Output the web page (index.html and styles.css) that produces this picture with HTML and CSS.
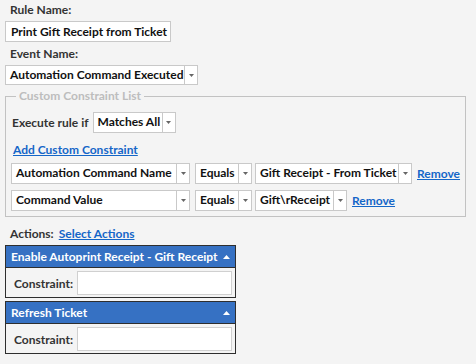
FILE: index.html
```html
<!DOCTYPE html>
<html lang="en">
<head>
    <meta charset="UTF-8">
    <title>Rule Editor</title>
    <link rel="stylesheet" href="styles.css">
</head>
<body>
    <div class="rule-form">
        <div class="field-label">Rule Name:</div>
        <div class="textbox rule-name">Print Gift Receipt from Ticket</div>

        <div class="field-label">Event Name:</div>
        <div class="combo event-combo">
            <span class="combo-text">Automation Command Executed</span>
            <span class="combo-btn"><svg width="5" height="3" viewBox="0 0 5 3"><path d="M0 0h5L2.5 3z" fill="#666"/></svg></span>
        </div>

        <fieldset class="constraint-list">
            <legend>Custom Constraint List</legend>
            <div class="execute-row">
                <span class="execute-label">Execute rule if</span>
                <div class="combo match-combo">
                    <span class="combo-text">Matches All</span>
                    <span class="combo-btn"><svg width="5" height="3" viewBox="0 0 5 3"><path d="M0 0h5L2.5 3z" fill="#666"/></svg></span>
                </div>
            </div>
            <a class="link add-link" href="#">Add Custom Constraint</a>

            <div class="constraint-row">
                <div class="combo name-combo">
                    <span class="combo-text">Automation Command Name</span>
                    <span class="combo-btn"><svg width="5" height="3" viewBox="0 0 5 3"><path d="M0 0h5L2.5 3z" fill="#666"/></svg></span>
                </div>
                <div class="combo op-combo">
                    <span class="combo-text">Equals</span>
                    <span class="combo-btn"><svg width="5" height="3" viewBox="0 0 5 3"><path d="M0 0h5L2.5 3z" fill="#666"/></svg></span>
                </div>
                <div class="combo value-combo wide">
                    <span class="combo-text">Gift Receipt - From Ticket</span>
                    <span class="combo-btn"><svg width="5" height="3" viewBox="0 0 5 3"><path d="M0 0h5L2.5 3z" fill="#666"/></svg></span>
                </div>
                <a class="link remove-link" href="#">Remove</a>
            </div>
            <div class="constraint-row">
                <div class="combo name-combo">
                    <span class="combo-text">Command Value</span>
                    <span class="combo-btn"><svg width="5" height="3" viewBox="0 0 5 3"><path d="M0 0h5L2.5 3z" fill="#666"/></svg></span>
                </div>
                <div class="combo op-combo">
                    <span class="combo-text">Equals</span>
                    <span class="combo-btn"><svg width="5" height="3" viewBox="0 0 5 3"><path d="M0 0h5L2.5 3z" fill="#666"/></svg></span>
                </div>
                <div class="combo value-combo narrow">
                    <span class="combo-text">Gift\rReceipt</span>
                    <span class="combo-btn"><svg width="5" height="3" viewBox="0 0 5 3"><path d="M0 0h5L2.5 3z" fill="#666"/></svg></span>
                </div>
                <a class="link remove-link" href="#">Remove</a>
            </div>
        </fieldset>

        <div class="actions-head">
            <span class="field-label inline">Actions:</span>
            <a class="link" href="#">Select Actions</a>
        </div>

        <div class="action-panel">
            <div class="action-header">
                <span>Enable Autoprint Receipt - Gift Receipt</span>
                <svg width="7" height="4" viewBox="0 0 7 4"><path d="M0 4L3.5 0 7 4z" fill="#fff"/></svg>
            </div>
            <div class="action-body">
                <span class="constraint-label">Constraint:</span>
                <div class="textbox constraint-box"></div>
            </div>
        </div>
        <div class="action-panel">
            <div class="action-header">
                <span>Refresh Ticket</span>
                <svg width="7" height="4" viewBox="0 0 7 4"><path d="M0 4L3.5 0 7 4z" fill="#fff"/></svg>
            </div>
            <div class="action-body">
                <span class="constraint-label">Constraint:</span>
                <div class="textbox constraint-box"></div>
            </div>
        </div>
    </div>
</body>
</html>
```

FILE: styles.css
```css
body {
    margin: 0;
    background-color: #f4f4f4;
    font-family: 'Lato', 'Noto Sans', sans-serif;
    font-size: 12px;
    font-weight: 700;
    color: #333;
    white-space: nowrap;
}
.rule-form {
    padding: 2px 5px;
    display: flex;
    flex-direction: column;
    align-items: flex-start;
}
.field-label {
    line-height: 16px;
    padding-left: 5px;
    margin-top: 4px;
}
.field-label:first-child {
    margin-top: 0;
}
.field-label.inline {
    margin: 0;
    padding: 0;
}
.textbox {
    box-sizing: border-box;
    background: white;
    border: 1px solid #c9c9c9;
    color: #111;
    height: 21px;
    line-height: 19px;
    padding: 0 5px;
}
.rule-name {
    width: 166px;
    margin-top: 3px;
}
.combo {
    box-sizing: border-box;
    display: flex;
    height: 20px;
    background: white;
    border: 1px solid #c9c9c9;
    color: #111;
}
.combo-text {
    flex: 1;
    line-height: 18px;
    padding: 0 4px;
    overflow: hidden;
}
.combo-btn {
    width: 12px;
    border-left: 1px solid #c9c9c9;
    display: flex;
    align-items: center;
    justify-content: center;
}
.event-combo {
    width: 193px;
    margin-top: 3px;
}
.constraint-list {
    box-sizing: border-box;
    width: 458px;
    margin: 4px 0 0 0;
    padding: 9px 5px 5px 5px;
    border: 1px solid #c2c2c2;
    display: flex;
    flex-direction: column;
    align-items: flex-start;
}
.constraint-list legend {
    color: #bdbdbd;
    padding: 0 3px;
    margin-left: 5px;
    line-height: 14px;
}
.execute-row {
    display: flex;
    align-items: center;
    gap: 4px;
}
.execute-label {
    padding-left: 1px;
}
.match-combo {
    width: 83px;
    height: 21px;
}
.link {
    color: #1466c8;
    text-decoration: underline;
}
.add-link {
    margin-top: 9px;
    line-height: 16px;
    padding-left: 2px;
}
.constraint-row {
    display: flex;
    align-items: center;
    margin-top: 5px;
}
.constraint-row + .constraint-row {
    margin-top: 6px;
}
.name-combo {
    width: 179px;
    height: 21px;
}
.op-combo {
    width: 57px;
    height: 21px;
    margin-left: 5px;
}
.value-combo {
    height: 21px;
    margin-left: 3px;
}
.value-combo.wide {
    width: 157px;
}
.value-combo.narrow {
    width: 92px;
}
.remove-link {
    margin-left: 5px;
}
.actions-head {
    display: flex;
    gap: 5px;
    line-height: 16px;
    margin-top: 9px;
    padding-left: 5px;
}
.action-panel {
    box-sizing: border-box;
    width: 231px;
    border: 1px solid #2e2e2e;
    margin-top: 3px;
}
.action-panel + .action-panel {
    margin-top: 3px;
}
.action-header {
    display: flex;
    align-items: center;
    justify-content: space-between;
    height: 21px;
    background: #3671c3;
    color: white;
    font-weight: 700;
    padding: 0 5px 0 5px;
    border-bottom: 1px solid #2e2e2e;
}
.action-body {
    display: flex;
    align-items: center;
    gap: 4px;
    padding: 3px 3px 2px 8px;
}
.constraint-box {
    flex: 1;
    height: 24px;
    border-color: #d0d0d0;
}
```
